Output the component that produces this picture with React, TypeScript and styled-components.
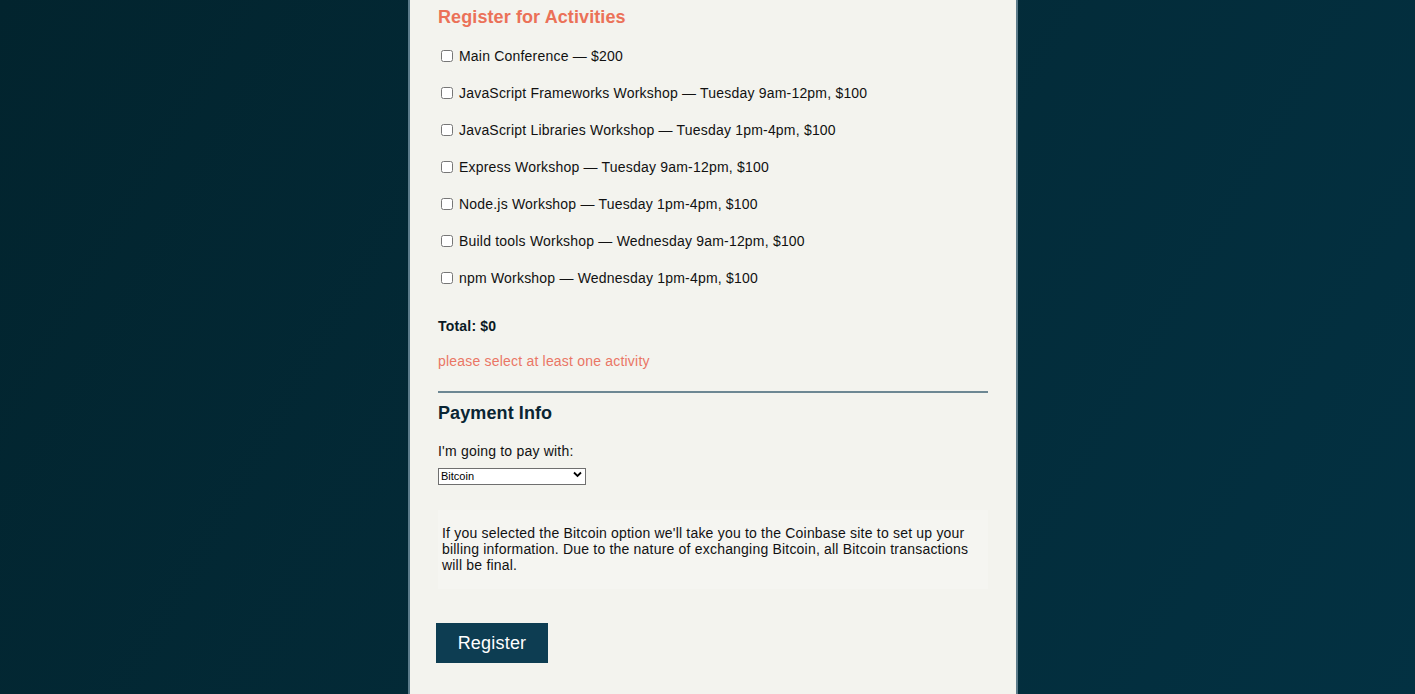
import React from "react";
import styled, { createGlobalStyle } from "styled-components";

const Global = createGlobalStyle`
  html, body { margin: 0; padding: 0; }
  body {
    font-family: "Liberation Sans", Arial, Helvetica, sans-serif;
    background: linear-gradient(120deg, #02242e 0%, #032a37 45%, #033142 100%);
    min-height: 100vh;
  }
`;

const Page = styled.div`
  display: flex;
  justify-content: center;
  padding-left: 11px;
  min-height: 100vh;
`;

const Panel = styled.form`
  box-sizing: border-box;
  width: 610px;
  min-height: 100vh;
  background: #f3f3ee;
  border-left: 2px solid #5b7b8a;
  border-right: 2px solid #5b7b8a;
  padding: 6px 28px 40px;
  color: #111;
  display: flex;
  flex-direction: column;
  letter-spacing: 0.2px;
`;

const Heading = styled.h2<{ $accent?: boolean }>`
  margin: 0;
  font-size: 18px;
  line-height: 22px;
  font-weight: 700;
  letter-spacing: 0.1px;
  color: ${(p) => (p.$accent ? "#eb7158" : "#0a2533")};
`;

const ActivityList = styled.div`
  display: flex;
  flex-direction: column;
  margin-top: 9px;
`;

const ActivityRow = styled.label`
  display: flex;
  align-items: center;
  height: 37px;
  font-size: 14px;
  line-height: 18px;
`;

const Check = styled.input`
  width: 12px;
  height: 12px;
  margin: 0 6px 0 3px;
`;

const Total = styled.p`
  margin: 21px 0 0;
  font-size: 14px;
  line-height: 18px;
  font-weight: 700;
  color: #0a1a24;
`;

const ErrorText = styled.p`
  margin: 17px 0 0;
  font-size: 14px;
  line-height: 18px;
  color: #ea7665;
`;

const Rule = styled.hr`
  margin: 21px 0 9px;
  border: none;
  height: 2px;
  background: #6d8793;
`;

const FieldLabel = styled.label`
  margin-top: 18px;
  font-size: 14px;
  line-height: 18px;
  color: #111;
`;

const SelectWrap = styled.div`
  position: relative;
  width: 148px;
  height: 17px;
  margin-top: 6px;
`;

const Select = styled.select`
  appearance: none;
  box-sizing: border-box;
  width: 148px;
  height: 17px;
  margin: 0;
  padding: 0 0 0 2px;
  border: 1px solid #6f6f6f;
  border-radius: 0;
  background: #fff;
  font-family: "Liberation Sans", Arial, sans-serif;
  font-size: 11px;
  line-height: 15px;
  color: #000;
`;

const Chevron = styled.svg`
  position: absolute;
  right: 4px;
  top: 5px;
  width: 9px;
  height: 7px;
  pointer-events: none;
`;

const InfoBox = styled.div`
  margin-top: 27px;
  padding: 15px 4px 16px;
  background: #f5f5f1;
  font-size: 14px;
  line-height: 16px;
  color: #111;
`;

const Submit = styled.button`
  align-self: flex-start;
  margin: 34px 0 0 -2px;
  width: 112px;
  height: 40px;
  border: none;
  background: #0d3d52;
  color: #fff;
  font-family: "Liberation Sans", Arial, sans-serif;
  font-size: 18px;
  letter-spacing: 0.2px;
  cursor: pointer;
`;

const activities = [
  "Main Conference — $200",
  "JavaScript Frameworks Workshop — Tuesday 9am-12pm, $100",
  "JavaScript Libraries Workshop — Tuesday 1pm-4pm, $100",
  "Express Workshop — Tuesday 9am-12pm, $100",
  "Node.js Workshop — Tuesday 1pm-4pm, $100",
  "Build tools Workshop — Wednesday 9am-12pm, $100",
  "npm Workshop — Wednesday 1pm-4pm, $100",
];

export default function App() {
  return (
    <>
      <Global />
      <Page>
        <Panel onSubmit={(e) => e.preventDefault()}>
          <Heading $accent>Register for Activities</Heading>
          <ActivityList>
            {activities.map((a) => (
              <ActivityRow key={a}>
                <Check type="checkbox" />
                {a}
              </ActivityRow>
            ))}
          </ActivityList>
          <Total>Total: $0</Total>
          <ErrorText>please select at least one activity</ErrorText>
          <Rule />
          <Heading>Payment Info</Heading>
          <FieldLabel htmlFor="payment">I'm going to pay with:</FieldLabel>
          <SelectWrap>
            <Select id="payment" defaultValue="bitcoin">
              <option value="credit">Credit Card</option>
              <option value="paypal">PayPal</option>
              <option value="bitcoin">Bitcoin</option>
            </Select>
            <Chevron viewBox="0 0 9 7">
              <path d="M1 1.5 L4.5 5 L8 1.5" fill="none" stroke="#000" strokeWidth="1.8" />
            </Chevron>
          </SelectWrap>
          <InfoBox>
            If you selected the Bitcoin option we'll take you to the Coinbase site to set up your
            billing information. Due to the nature of exchanging Bitcoin, all Bitcoin transactions
            will be final.
          </InfoBox>
          <Submit type="submit">Register</Submit>
        </Panel>
      </Page>
    </>
  );
}
